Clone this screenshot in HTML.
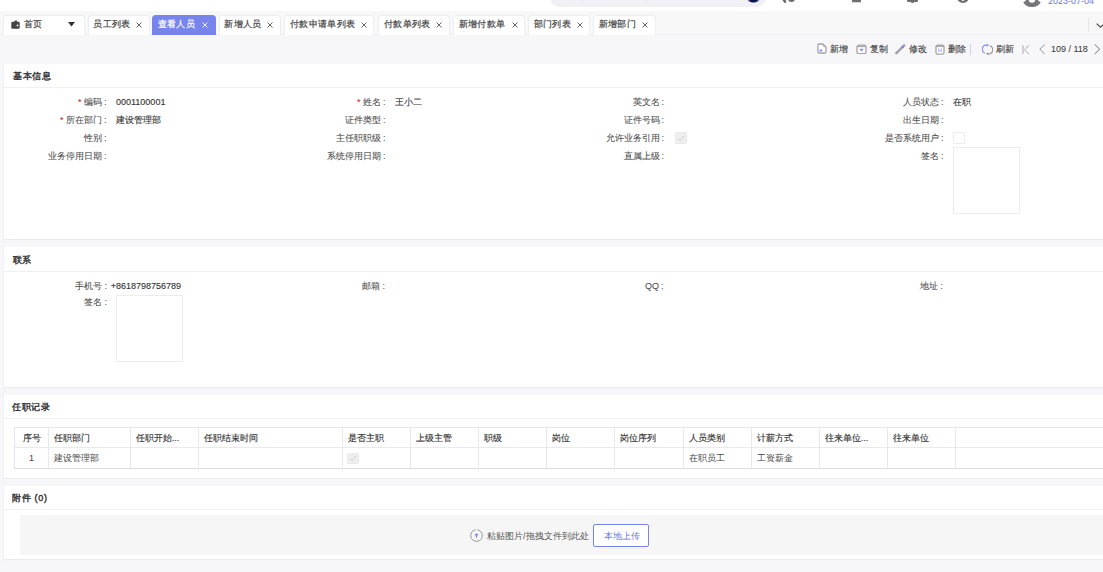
<!DOCTYPE html><html><head><meta charset="utf-8"><style>
*{box-sizing:border-box;margin:0;padding:0}
html,body{width:1103px;height:572px;overflow:hidden;background:#f7f7f9;font-family:"Liberation Sans",sans-serif;color:#333}
.a{position:absolute;white-space:nowrap}
.tab{position:absolute;top:15px;height:19.5px;background:#fff;border:1px solid #eceef2;border-bottom:none;border-radius:4px 4px 0 0;font-size:9.3px;color:#444}
.tab.act{background:#7684eb;border-color:#7684eb;color:#fff}
.card{position:absolute;left:4px;width:1130px;background:#fff;border-bottom:1px solid #eaeaf0}
.ttl{position:absolute;font-size:9px;letter-spacing:0.7px;color:#333;-webkit-text-stroke:0.4px #333;line-height:12px;white-space:nowrap}
.dv{position:absolute;left:0;width:1130px;height:1px;background:#eff0f3}
.lb{position:absolute;font-size:9px;color:#4d4d4d;-webkit-text-stroke:0.08px #4d4d4d;line-height:12px;white-space:nowrap}
.vl{position:absolute;font-size:9px;color:#333;-webkit-text-stroke:0.12px #333;line-height:12px;white-space:nowrap}
.req{color:#f5222d}
.tb{position:absolute;font-size:9px;color:#444;-webkit-text-stroke:0.15px #444;line-height:12px;white-space:nowrap}
</style></head><body>
<div class="a" style="left:0;top:0;width:1103px;height:11.5px;background:#fff;border-bottom:1px solid #efeff2"></div>
<div class="a" style="left:550px;top:-20px;width:216px;height:26.5px;background:#f0f0f5;border-radius:9px"></div>
<svg class="a" style="left:746px;top:-8px" width="15" height="11" viewBox="0 0 15 11"><defs><linearGradient id="gb" x1="0" x2="1"><stop offset="0" stop-color="#8a6cf0"/><stop offset="0.35" stop-color="#0c0c3a"/><stop offset="0.7" stop-color="#101a50"/><stop offset="1" stop-color="#5fd0f0"/></linearGradient></defs><ellipse cx="7.5" cy="6.3" rx="6.6" ry="4.1" fill="url(#gb)"/></svg>
<svg class="a" style="left:781px;top:-8px" width="15" height="11" viewBox="0 0 15 11"><path d="M1.5 6L4 9.6" stroke="#6b6b6f" stroke-width="2.6" stroke-linecap="round"/><circle cx="10.5" cy="6.4" r="3.6" fill="#6b6b6f"/><circle cx="10.5" cy="6" r="1.6" fill="#9a9a9e"/></svg>
<div class="a" style="left:851.5px;top:-8px;width:9.5px;height:11.3px;background:#6f6f73;border-radius:2px"></div>
<div class="a" style="left:853px;top:1.6px;width:6.5px;height:0.8px;background:#ddd"></div>
<div class="a" style="left:907px;top:-8px;width:11px;height:10px;background:#6f6f73;border-radius:0 0 1px 1px"></div>
<div class="a" style="left:911.3px;top:2px;width:2.6px;height:1.3px;background:#6f6f73;border-radius:0 0 2px 2px"></div>
<div class="a" style="left:956.8px;top:-9px;width:12.6px;height:12.3px;background:#6f6f73;border-radius:50%"></div>
<div class="a" style="left:962.3px;top:-0.5px;width:1.6px;height:1.6px;background:#fff;border-radius:50%"></div>
<svg class="a" style="left:1018px;top:0" width="28" height="10" viewBox="0 0 28 10"><path d="M5.3 2.2C7.5 1.2 8.5 0 8.8 -1H19.2C19.5 0 20.5 1.2 22.7 2.2C20.8 5.8 17.6 7 14 7C10.4 7 7.2 5.8 5.3 2.2Z" fill="#78787c"/><circle cx="14" cy="-0.6" r="3.3" fill="#fff"/></svg>
<div class="a" style="left:1048px;top:-4.2px;font-size:9px;line-height:10px;color:#6a75ea">2023-07-04</div>
<div class="a" style="left:0;top:11px;width:1103px;height:23.5px;background:#f8f8f9;border-bottom:1px solid #eeeef2"></div>
<div class="a" style="left:570px;top:-9.3px;font-size:9px;line-height:10px;color:#c8c8cc">搜索菜单 · 功能名称</div>
<div class="a" style="left:2.5px;top:63px;width:1px;height:500px;background:#f1f1f5"></div>
<div class="tab" style="left:3.3px;width:81.7px"></div>
<div class="a" style="left:24px;top:19.3px;font-size:9px;letter-spacing:0.35px;line-height:11px;color:#444;-webkit-text-stroke:0.2px #444">首页</div>
<div class="tab" style="left:87.5px;width:62.099999999999994px"></div>
<div class="a" style="left:93.2px;top:19.3px;font-size:9px;letter-spacing:0.35px;line-height:11px;color:#444;-webkit-text-stroke:0.2px #444">员工列表</div>
<svg class="a" style="left:136.1px;top:22px" width="6" height="6" viewBox="0 0 6 6"><path d="M0.5 0.5L5.5 5.5M5.5 0.5L0.5 5.5" stroke="#555" stroke-width="0.9"/></svg>
<div class="tab act" style="left:152px;width:64px"></div>
<div class="a" style="left:157.7px;top:19.3px;font-size:9px;letter-spacing:0.35px;line-height:11px;color:#fff;-webkit-text-stroke:0.2px #fff">查看人员</div>
<svg class="a" style="left:202.2px;top:22px" width="6" height="6" viewBox="0 0 6 6"><path d="M0.5 0.5L5.5 5.5M5.5 0.5L0.5 5.5" stroke="#fff" stroke-width="0.9"/></svg>
<div class="tab" style="left:218.6px;width:62.099999999999994px"></div>
<div class="a" style="left:224.29999999999998px;top:19.3px;font-size:9px;letter-spacing:0.35px;line-height:11px;color:#444;-webkit-text-stroke:0.2px #444">新增人员</div>
<svg class="a" style="left:267.2px;top:22px" width="6" height="6" viewBox="0 0 6 6"><path d="M0.5 0.5L5.5 5.5M5.5 0.5L0.5 5.5" stroke="#555" stroke-width="0.9"/></svg>
<div class="tab" style="left:284.3px;width:90.0px"></div>
<div class="a" style="left:290.0px;top:19.3px;font-size:9px;letter-spacing:0.35px;line-height:11px;color:#444;-webkit-text-stroke:0.2px #444">付款申请单列表</div>
<svg class="a" style="left:360.9px;top:22px" width="6" height="6" viewBox="0 0 6 6"><path d="M0.5 0.5L5.5 5.5M5.5 0.5L0.5 5.5" stroke="#555" stroke-width="0.9"/></svg>
<div class="tab" style="left:378.2px;width:71.40000000000003px"></div>
<div class="a" style="left:383.9px;top:19.3px;font-size:9px;letter-spacing:0.35px;line-height:11px;color:#444;-webkit-text-stroke:0.2px #444">付款单列表</div>
<svg class="a" style="left:436.1px;top:22px" width="6" height="6" viewBox="0 0 6 6"><path d="M0.5 0.5L5.5 5.5M5.5 0.5L0.5 5.5" stroke="#555" stroke-width="0.9"/></svg>
<div class="tab" style="left:452.9px;width:72.10000000000002px"></div>
<div class="a" style="left:458.59999999999997px;top:19.3px;font-size:9px;letter-spacing:0.35px;line-height:11px;color:#444;-webkit-text-stroke:0.2px #444">新增付款单</div>
<svg class="a" style="left:511.5px;top:22px" width="6" height="6" viewBox="0 0 6 6"><path d="M0.5 0.5L5.5 5.5M5.5 0.5L0.5 5.5" stroke="#555" stroke-width="0.9"/></svg>
<div class="tab" style="left:528px;width:62px"></div>
<div class="a" style="left:533.7px;top:19.3px;font-size:9px;letter-spacing:0.35px;line-height:11px;color:#444;-webkit-text-stroke:0.2px #444">部门列表</div>
<svg class="a" style="left:576.5px;top:22px" width="6" height="6" viewBox="0 0 6 6"><path d="M0.5 0.5L5.5 5.5M5.5 0.5L0.5 5.5" stroke="#555" stroke-width="0.9"/></svg>
<div class="tab" style="left:593px;width:62.799999999999955px"></div>
<div class="a" style="left:598.7px;top:19.3px;font-size:9px;letter-spacing:0.35px;line-height:11px;color:#444;-webkit-text-stroke:0.2px #444">新增部门</div>
<svg class="a" style="left:642.3px;top:22px" width="6" height="6" viewBox="0 0 6 6"><path d="M0.5 0.5L5.5 5.5M5.5 0.5L0.5 5.5" stroke="#555" stroke-width="0.9"/></svg>
<svg class="a" style="left:10.5px;top:20px" width="9" height="9" viewBox="0 0 9 9"><path d="M3.5 0.5h2.5v1.5h-2.5z" fill="#444"/><rect x="0.3" y="1.8" width="8.4" height="7" rx="1.3" fill="#444"/><circle cx="6.5" cy="5.4" r="0.9" fill="#fff"/></svg>
<svg class="a" style="left:68px;top:22.3px" width="7" height="5" viewBox="0 0 7 5"><path d="M0 0h7L3.5 4.5z" fill="#333"/></svg>
<div class="a" style="left:1088px;top:17.5px;width:1px;height:14px;background:#e6e6e8"></div>
<svg class="a" style="left:1095.5px;top:22.5px" width="9" height="5" viewBox="0 0 9 5"><path d="M0.6 0.6L4.5 4.2L8.4 0.6" stroke="#4a4a4a" stroke-width="1.15" fill="none"/></svg>
<svg class="a" style="left:816.5px;top:43.3px" width="10" height="11" viewBox="0 0 10 11"><path d="M1.9 1H5.9L9 4.1V8.9Q9 10 7.9 10H1.9Q0.9 10 0.9 8.9V2Q0.9 1 1.9 1Z" stroke="#a4a4a8" stroke-width="1.3" fill="#fff" stroke-linejoin="round"/><path d="M6 1.2L6.6 3.4L8.8 4" stroke="#a4a4a8" stroke-width="0.9" fill="none"/><ellipse cx="3.9" cy="7.6" rx="1.5" ry="1" fill="#7783ee"/></svg>
<svg class="a" style="left:855.5px;top:43.8px" width="11" height="10.5" viewBox="0 0 11 10.5"><rect x="1" y="1.1" width="9" height="8.6" rx="1.8" stroke="#a4a4a8" stroke-width="1.3" fill="#fff"/><path d="M1.5 2.5H9.5" stroke="#a4a4a8" stroke-width="1.3"/><path d="M3.9 5.3L5.5 6.8L7.1 5.3Z" fill="#7783ee" stroke="#7783ee" stroke-width="0.9" stroke-linejoin="round"/></svg>
<svg class="a" style="left:895px;top:44px" width="11" height="10.5" viewBox="0 0 11 10.5"><path d="M1.4 9.2L9.2 1.4" stroke="#a4a4a8" stroke-width="2.5" stroke-linecap="round"/><path d="M7 3.6L8.3 2.3" stroke="#7783ee" stroke-width="2.5"/><path d="M1 9.6L2 8.6" stroke="#888" stroke-width="1"/></svg>
<svg class="a" style="left:935px;top:43.5px" width="10" height="11" viewBox="0 0 10 11"><rect x="1" y="1.1" width="8" height="9.1" rx="1.6" stroke="#a4a4a8" stroke-width="1.3" fill="#fff"/><path d="M1.2 2.3H8.8" stroke="#a4a4a8" stroke-width="1.6"/><path d="M3.8 4.7V8M6.2 4.7V8" stroke="#b0b7f4" stroke-width="1.4"/></svg>
<svg class="a" style="left:981.5px;top:43.6px" width="11" height="11" viewBox="0 0 11 11"><path d="M6.2 1.2A4.3 4.3 0 0 0 2.9 9.2" stroke="#7783ee" stroke-width="1.2" fill="none"/><path d="M4.8 0.6L6.9 1.2L5.3 2.8Z" fill="#7783ee"/><path d="M4.8 9.8A4.3 4.3 0 0 0 8.1 1.8" stroke="#8e8e92" stroke-width="1.2" fill="none"/><path d="M6.2 10.4L4.1 9.8L5.7 8.2Z" fill="#8e8e92"/></svg>
<svg class="a" style="left:1021.5px;top:44.5px" width="8" height="9.5" viewBox="0 0 8 9.5"><path d="M1 0.3V9.2" stroke="#a9a9ad" stroke-width="1"/><path d="M6.9 0.4L2.6 4.75L6.9 9.1" stroke="#a9a9ad" stroke-width="1" fill="none"/></svg>
<svg class="a" style="left:1039px;top:44px" width="6.5" height="10.5" viewBox="0 0 6.5 10.5"><path d="M5.8 0.4L0.8 5.2L5.8 10" stroke="#8a8a8e" stroke-width="0.9" fill="none"/></svg>
<svg class="a" style="left:1093.5px;top:44px" width="6.5" height="10.5" viewBox="0 0 6.5 10.5"><path d="M0.7 0.4L5.7 5.2L0.7 10" stroke="#666" stroke-width="0.9" fill="none"/></svg>
<div class="tb" style="left:829.5px;top:43px">新增</div>
<div class="tb" style="left:869.5px;top:43px">复制</div>
<div class="tb" style="left:908.6px;top:43px">修改</div>
<div class="tb" style="left:948px;top:43px">删除</div>
<div class="a" style="left:970px;top:44px;width:1px;height:11px;background:#c9d0e6"></div>
<div class="tb" style="left:996px;top:43px">刷新</div>
<div class="tb" style="left:1051px;top:43px;color:#3a3a3a;font-size:9px;-webkit-text-stroke:0.05px #3a3a3a">109 / 118</div>
<div class="card" style="top:63.5px;height:176.1px"></div>
<div class="a" style="left:4px;top:87px;width:1130px;height:1px;background:#eff0f3"></div>
<div class="card" style="top:247px;height:140.6px"></div>
<div class="a" style="left:4px;top:271px;width:1130px;height:1px;background:#eff0f3"></div>
<div class="card" style="top:394.8px;height:84.29999999999998px"></div>
<div class="a" style="left:4px;top:418px;width:1130px;height:1px;background:#eff0f3"></div>
<div class="card" style="top:486px;height:73.6px"></div>
<div class="a" style="left:4px;top:509px;width:1130px;height:1px;background:#eff0f3"></div>
<div class="ttl" style="left:13px;top:69.5px">基本信息</div>
<div class="ttl" style="left:12.5px;top:253.5px">联系</div>
<div class="ttl" style="left:12px;top:400.7px">任职记录</div>
<div class="ttl" style="left:12px;top:491.7px">附件 (0)</div>
<div class="lb" style="right:996.4px;top:96px"><span class="req">* </span>编码<span style="margin-left:2px">:</span></div>
<div class="vl" style="left:116px;top:96px">0001100001</div>
<div class="lb" style="right:996.4px;top:114px"><span class="req">* </span>所在部门<span style="margin-left:2px">:</span></div>
<div class="vl" style="left:116px;top:114px">建设管理部</div>
<div class="lb" style="right:996.4px;top:131.5px">性别<span style="margin-left:2px">:</span></div>
<div class="lb" style="right:996.4px;top:149.5px">业务停用日期<span style="margin-left:2px">:</span></div>
<div class="lb" style="right:717.4px;top:96px"><span class="req">* </span>姓名<span style="margin-left:2px">:</span></div>
<div class="vl" style="left:395px;top:96px">王小二</div>
<div class="lb" style="right:717.4px;top:114px">证件类型<span style="margin-left:2px">:</span></div>
<div class="lb" style="right:717.4px;top:131.5px">主任职职级<span style="margin-left:2px">:</span></div>
<div class="lb" style="right:717.4px;top:149.5px">系统停用日期<span style="margin-left:2px">:</span></div>
<div class="lb" style="right:438.9px;top:96px">英文名<span style="margin-left:2px">:</span></div>
<div class="lb" style="right:438.9px;top:114px">证件号码<span style="margin-left:2px">:</span></div>
<div class="lb" style="right:438.9px;top:131.5px">允许业务引用<span style="margin-left:2px">:</span></div>
<div class="lb" style="right:438.9px;top:149.5px">直属上级<span style="margin-left:2px">:</span></div>
<div class="lb" style="right:159.4px;top:96px">人员状态<span style="margin-left:2px">:</span></div>
<div class="vl" style="left:953px;top:96px">在职</div>
<div class="lb" style="right:159.4px;top:114px">出生日期<span style="margin-left:2px">:</span></div>
<div class="lb" style="right:159.4px;top:131.5px">是否系统用户<span style="margin-left:2px">:</span></div>
<div class="lb" style="right:159.4px;top:149.5px">签名<span style="margin-left:2px">:</span></div>
<div class="a" style="left:675px;top:132px;width:11.5px;height:11.5px;background:#eeeeee;border:1px solid #e9e9e9;border-radius:1.5px"></div>
<svg class="a" style="left:677px;top:134.5px" width="8" height="7" viewBox="0 0 8 7"><path d="M1 3.5L3 5.5L7 1" stroke="#c8c8c8" stroke-width="0.9" fill="none"/></svg>
<div class="a" style="left:953px;top:132px;width:12px;height:12px;background:#fff;border:1px solid #ebebef;border-radius:1.5px"></div>
<div class="a" style="left:953px;top:147px;width:66.5px;height:67px;background:#fff;border:1px solid #ebebf0"></div>
<div class="lb" style="right:996.1px;top:279.8px">手机号<span style="margin-left:2px">:</span></div>
<div class="vl" style="left:110.7px;top:279.8px">+8618798756789</div>
<div class="lb" style="right:996.1px;top:296.4px">签名<span style="margin-left:2px">:</span></div>
<div class="a" style="left:116px;top:295px;width:67px;height:66.5px;background:#fff;border:1px solid #ebebf0"></div>
<div class="lb" style="right:718.1px;top:279.8px">邮箱<span style="margin-left:2px">:</span></div>
<div class="lb" style="right:439.4px;top:279.8px">QQ<span style="margin-left:2px">:</span></div>
<div class="lb" style="right:160.29999999999998px;top:279.8px">地址<span style="margin-left:2px">:</span></div>
<div class="a" style="left:14.2px;top:427px;width:1120px;height:42.2px;border:1px solid #e6e6e8;border-bottom:1.4px solid #dcdcde;background:#fff"></div>
<div class="a" style="left:14.2px;top:447.3px;width:1120px;height:1.2px;background:#eaeaec"></div>
<div class="a" style="left:48.2px;top:427px;width:1px;height:42px;background:#e8e8ea"></div>
<div class="a" style="left:129.8px;top:427px;width:1px;height:42px;background:#e8e8ea"></div>
<div class="a" style="left:198.3px;top:427px;width:1px;height:42px;background:#e8e8ea"></div>
<div class="a" style="left:341.8px;top:427px;width:1px;height:42px;background:#e8e8ea"></div>
<div class="a" style="left:409.8px;top:427px;width:1px;height:42px;background:#e8e8ea"></div>
<div class="a" style="left:478.3px;top:427px;width:1px;height:42px;background:#e8e8ea"></div>
<div class="a" style="left:546.3px;top:427px;width:1px;height:42px;background:#e8e8ea"></div>
<div class="a" style="left:614.3px;top:427px;width:1px;height:42px;background:#e8e8ea"></div>
<div class="a" style="left:682.8px;top:427px;width:1px;height:42px;background:#e8e8ea"></div>
<div class="a" style="left:750.8px;top:427px;width:1px;height:42px;background:#e8e8ea"></div>
<div class="a" style="left:818.8px;top:427px;width:1px;height:42px;background:#e8e8ea"></div>
<div class="a" style="left:886.8px;top:427px;width:1px;height:42px;background:#e8e8ea"></div>
<div class="a" style="left:954.8px;top:427px;width:1px;height:42px;background:#e8e8ea"></div>
<div class="a" style="left:14.5px;width:34px;text-align:center;top:431.5px;font-size:9px;line-height:12px;color:#333;-webkit-text-stroke:0.15px #333">序号</div>
<div class="a" style="left:54.2px;top:431.5px;font-size:9px;line-height:12px;color:#333;-webkit-text-stroke:0.15px #333">任职部门</div>
<div class="a" style="left:135.8px;top:431.5px;font-size:9px;line-height:12px;color:#333;-webkit-text-stroke:0.15px #333">任职开始...</div>
<div class="a" style="left:204.3px;top:431.5px;font-size:9px;line-height:12px;color:#333;-webkit-text-stroke:0.15px #333">任职结束时间</div>
<div class="a" style="left:347.8px;top:431.5px;font-size:9px;line-height:12px;color:#333;-webkit-text-stroke:0.15px #333">是否主职</div>
<div class="a" style="left:415.8px;top:431.5px;font-size:9px;line-height:12px;color:#333;-webkit-text-stroke:0.15px #333">上级主管</div>
<div class="a" style="left:484.3px;top:431.5px;font-size:9px;line-height:12px;color:#333;-webkit-text-stroke:0.15px #333">职级</div>
<div class="a" style="left:552.3px;top:431.5px;font-size:9px;line-height:12px;color:#333;-webkit-text-stroke:0.15px #333">岗位</div>
<div class="a" style="left:620.3px;top:431.5px;font-size:9px;line-height:12px;color:#333;-webkit-text-stroke:0.15px #333">岗位序列</div>
<div class="a" style="left:688.8px;top:431.5px;font-size:9px;line-height:12px;color:#333;-webkit-text-stroke:0.15px #333">人员类别</div>
<div class="a" style="left:756.8px;top:431.5px;font-size:9px;line-height:12px;color:#333;-webkit-text-stroke:0.15px #333">计薪方式</div>
<div class="a" style="left:824.8px;top:431.5px;font-size:9px;line-height:12px;color:#333;-webkit-text-stroke:0.15px #333">往来单位...</div>
<div class="a" style="left:892.8px;top:431.5px;font-size:9px;line-height:12px;color:#333;-webkit-text-stroke:0.15px #333">往来单位</div>
<div class="a" style="left:14.5px;width:34px;text-align:center;top:452px;font-size:9px;line-height:12px;color:#444">1</div>
<div class="a" style="left:54.2px;top:452px;font-size:9px;line-height:12px;color:#444">建设管理部</div>
<div class="a" style="left:688.8px;top:452px;font-size:9px;line-height:12px;color:#444">在职员工</div>
<div class="a" style="left:756.8px;top:452px;font-size:9px;line-height:12px;color:#444">工资薪金</div>
<div class="a" style="left:347px;top:452.5px;width:11.5px;height:11.5px;background:#eeeeee;border:1px solid #e9e9e9;border-radius:1.5px"></div>
<svg class="a" style="left:349px;top:455px" width="8" height="7" viewBox="0 0 8 7"><path d="M1 3.5L3 5.5L7 1" stroke="#c8c8c8" stroke-width="0.9" fill="none"/></svg>
<div class="a" style="left:20px;top:514.8px;width:1110px;height:40.6px;background:#f6f6f6"></div>
<svg class="a" style="left:470px;top:529px" width="13" height="13" viewBox="0 0 13 13"><path d="M7.4 0.8A5.8 5.8 0 1 1 5.6 0.8" stroke="#8a8a8e" stroke-width="0.9" fill="none"/><path d="M4.2 6.3L6.5 4.3L8.8 6.3Z" fill="#6f7cf0"/><path d="M6.5 5.5V8.6" stroke="#6f7cf0" stroke-width="1.2"/></svg>
<div class="a" style="left:487px;top:529.5px;font-size:9px;line-height:12px;color:#555">粘贴图片/拖拽文件到此处</div>
<div class="a" style="left:593.3px;top:524px;width:56px;height:23px;border:1px solid #7684eb;border-radius:2px;background:#fff"></div>
<div class="a" style="left:604px;top:529.5px;font-size:9px;line-height:12px;color:#6673e6">本地上传</div>
</body></html>
